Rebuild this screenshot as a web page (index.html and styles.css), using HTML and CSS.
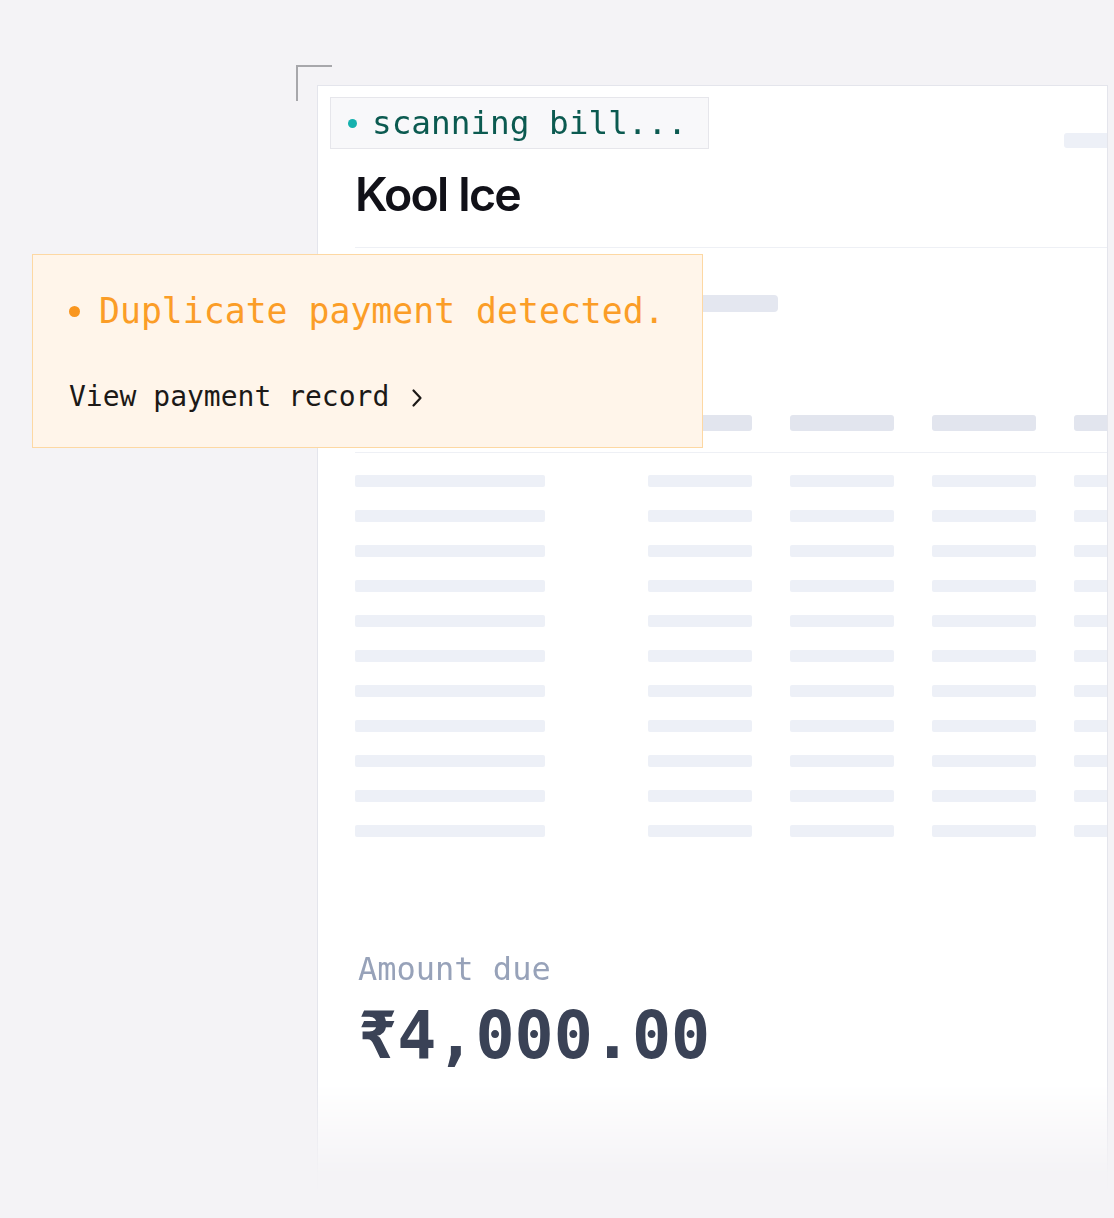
FILE: index.html
```html
<!DOCTYPE html>
<html lang="en">
<head>
<meta charset="utf-8">
<title>Kool Ice bill scan</title>
<link rel="stylesheet" href="styles.css">
</head>
<body>
<div class="stage">
  <div class="bracket"></div>
  <div class="card">
    <div class="card-head">
      <div class="badge"><span class="badge-dot"></span><span class="badge-text">scanning bill...</span></div>
      <div class="skel skel-top"></div>
    </div>
    <div class="card-body">
      <h1 class="title">Kool Ice</h1>
      <div class="divider first"></div>
      <div class="skel skel-sub"></div>
      <div class="grid head-row">
        <div></div>
        <div class="skel skel-h"></div>
        <div class="skel skel-h"></div>
        <div class="skel skel-h"></div>
        <div class="skel skel-h"></div>
      </div>
      <div class="divider second"></div>
      <div class="rows">
        <div class="grid row"><div class="skel skel-r wide"></div><div class="skel skel-r"></div><div class="skel skel-r"></div><div class="skel skel-r"></div><div class="skel skel-r"></div></div>
        <div class="grid row"><div class="skel skel-r wide"></div><div class="skel skel-r"></div><div class="skel skel-r"></div><div class="skel skel-r"></div><div class="skel skel-r"></div></div>
        <div class="grid row"><div class="skel skel-r wide"></div><div class="skel skel-r"></div><div class="skel skel-r"></div><div class="skel skel-r"></div><div class="skel skel-r"></div></div>
        <div class="grid row"><div class="skel skel-r wide"></div><div class="skel skel-r"></div><div class="skel skel-r"></div><div class="skel skel-r"></div><div class="skel skel-r"></div></div>
        <div class="grid row"><div class="skel skel-r wide"></div><div class="skel skel-r"></div><div class="skel skel-r"></div><div class="skel skel-r"></div><div class="skel skel-r"></div></div>
        <div class="grid row"><div class="skel skel-r wide"></div><div class="skel skel-r"></div><div class="skel skel-r"></div><div class="skel skel-r"></div><div class="skel skel-r"></div></div>
        <div class="grid row"><div class="skel skel-r wide"></div><div class="skel skel-r"></div><div class="skel skel-r"></div><div class="skel skel-r"></div><div class="skel skel-r"></div></div>
        <div class="grid row"><div class="skel skel-r wide"></div><div class="skel skel-r"></div><div class="skel skel-r"></div><div class="skel skel-r"></div><div class="skel skel-r"></div></div>
        <div class="grid row"><div class="skel skel-r wide"></div><div class="skel skel-r"></div><div class="skel skel-r"></div><div class="skel skel-r"></div><div class="skel skel-r"></div></div>
        <div class="grid row"><div class="skel skel-r wide"></div><div class="skel skel-r"></div><div class="skel skel-r"></div><div class="skel skel-r"></div><div class="skel skel-r"></div></div>
        <div class="grid row"><div class="skel skel-r wide"></div><div class="skel skel-r"></div><div class="skel skel-r"></div><div class="skel skel-r"></div><div class="skel skel-r"></div></div>
      </div>
      <div class="amount-label">Amount due</div>
      <div class="amount">₹4,000.00</div>
    </div>
  </div>
  <div class="alert">
    <div class="alert-title"><span class="alert-dot"></span><span>Duplicate payment detected.</span></div>
    <div class="alert-link"><span>View payment record</span>
      <svg class="chev" width="14" height="20" viewBox="0 0 14 20" aria-hidden="true"><path d="M3.5 2.5 L10.5 10 L3.5 17.5" fill="none" stroke="#1c1917" stroke-width="2.2" stroke-linecap="round" stroke-linejoin="round"/></svg>
    </div>
  </div>
</div>
</body>
</html>
```
FILE: styles.css
```css
html, body {
  margin: 0;
  padding: 0;
  background: #f4f3f6;
}
.stage {
  position: relative;
  width: 1114px;
  height: 1218px;
  box-sizing: border-box;
  padding: 85px 6px 0 317px;
  overflow: hidden;
  font-family: "DejaVu Sans Mono", "Liberation Mono", monospace;
}
.bracket {
  position: absolute;
  left: 296px;
  top: 65px;
  width: 34px;
  height: 34px;
  border-top: 2px solid #a7a7ab;
  border-left: 2px solid #a7a7ab;
}
.card {
  width: 791px;
  height: 1133px;
  box-sizing: border-box;
  background: #fff;
  border: 1px solid #e4e5ec;
  border-bottom: none;
  overflow: hidden;
  -webkit-mask-image: linear-gradient(to bottom, #000 0, #000 995px, rgba(0,0,0,0.05) 1088px, rgba(0,0,0,0) 1112px);
  mask-image: linear-gradient(to bottom, #000 0, #000 995px, rgba(0,0,0,0.05) 1088px, rgba(0,0,0,0) 1112px);
}
.card-head {
  display: flex;
  align-items: flex-start;
  justify-content: space-between;
  padding: 11px 0 0 12px;
}
.badge {
  width: 379px;
  height: 52px;
  box-sizing: border-box;
  display: flex;
  align-items: center;
  gap: 15px;
  padding-left: 17px;
  background: #f8f8fa;
  border: 1px solid #e6e6eb;
}
.badge-dot {
  width: 9px;
  height: 9px;
  border-radius: 50%;
  background: #16b1ae;
  flex: none;
}
.badge-text {
  font-size: 32.7px;
  line-height: 40px;
  color: #0b5a50;
  white-space: nowrap;
}
.skel {
  background: #edf0f7;
  border-radius: 3px;
}
.skel-top {
  width: 43px;
  height: 15px;
  margin-top: 36px;
  border-radius: 3px 0 0 3px;
}
.card-body {
  padding-left: 37px;
}
.title {
  margin: 22px 0 0 0;
  font-family: "Inter", "Liberation Sans", sans-serif;
  font-weight: 600;
  font-size: 46.5px;
  line-height: 47px;
  letter-spacing: -0.04em;
  word-spacing: 0.02em;
  color: #111118;
}
.divider {
  height: 1px;
  background: #eef0f5;
}
.divider.first {
  margin-top: 29px;
}
.skel-sub {
  width: 423px;
  height: 17px;
  margin-top: 47px;
  background: #e4e7f0;
  border-radius: 4px;
}
.grid {
  display: grid;
  grid-template-columns: 255px repeat(4, 104px);
  column-gap: 38px;
}
.head-row {
  margin-top: 103px;
}
.skel-h {
  height: 16px;
  background: #e2e5ee;
  border-radius: 3px;
}
.divider.second {
  margin-top: 21px;
}
.rows {
  display: flex;
  flex-direction: column;
  gap: 23px;
  margin-top: 22px;
}
.skel-r {
  height: 12px;
  background: #edf0f7;
  border-radius: 2px;
}
.skel-r.wide {
  width: 190px;
}
.amount-label {
  margin-top: 113px;
  margin-left: 3px;
  font-size: 32px;
  line-height: 38px;
  color: #97a2b9;
}
.amount {
  margin-top: 9px;
  margin-left: 3px;
  font-size: 65px;
  line-height: 78px;
  font-weight: 700;
  color: #3a4256;
}
.alert {
  position: absolute;
  left: 32px;
  top: 254px;
  width: 671px;
  height: 194px;
  box-sizing: border-box;
  background: #fff5ea;
  border: 1px solid #fdd8a3;
  padding: 35px 0 0 36px;
}
.alert-title {
  display: flex;
  align-items: center;
  gap: 19px;
  font-size: 34.8px;
  line-height: 42px;
  color: #fb9d27;
  white-space: nowrap;
}
.alert-dot {
  width: 11px;
  height: 11px;
  border-radius: 50%;
  background: #f9961f;
  flex: none;
}
.alert-link {
  display: flex;
  align-items: center;
  gap: 21px;
  margin-top: 48px;
  font-size: 28px;
  line-height: 34px;
  color: #1c1917;
  white-space: nowrap;
}
.chev {
  flex: none;
  margin-top: 2px;
}
```
